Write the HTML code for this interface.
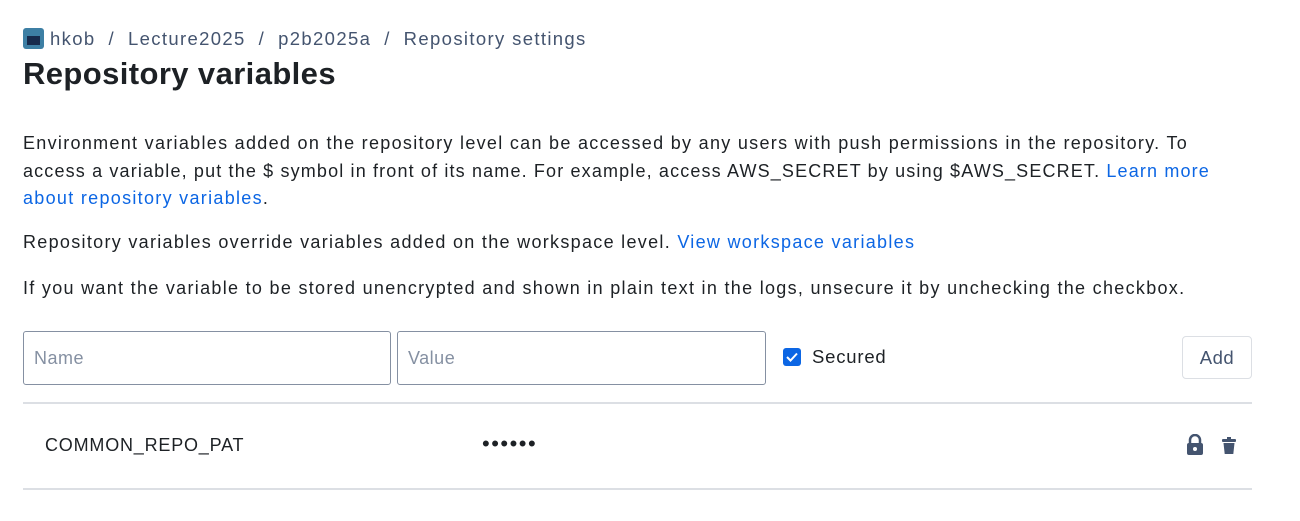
<!DOCTYPE html>
<html><head><style>
body{margin:0;width:1300px;height:521px;background:#fff;font-family:"Liberation Sans",sans-serif;color:#172b4d;position:relative;overflow:hidden}
.a{position:absolute;white-space:nowrap}
.crumb{left:23px;top:28px;font-size:18.5px;color:#44546f;letter-spacing:1.35px}
h1{position:absolute;left:23px;top:56px;margin:0;font-size:31px;font-weight:bold;color:#1d2125;letter-spacing:0.4px}
.p{position:absolute;left:23px;font-size:18px;line-height:27.5px;color:#1d2125;white-space:nowrap;letter-spacing:1.3px}
a{color:#0c66e4;text-decoration:none}
.in{position:absolute;top:331px;height:52px;border:1.5px solid #8590a2;border-radius:3px;font-size:18px;color:#8590a2;line-height:52px;padding-left:10px;box-sizing:border-box;letter-spacing:0.5px}
</style></head><body>
<div class="a crumb"><span style="display:inline-block;width:21px;height:21px;background:#3d7fa4;border-radius:3px;vertical-align:-4px;margin-right:6px;position:relative"><span style="position:absolute;left:4px;top:8px;width:13px;height:9px;background:#172b4d"></span></span>hkob &nbsp;/ &nbsp;Lecture2025 &nbsp;/ &nbsp;p2b2025a &nbsp;/ &nbsp;Repository settings</div>
<h1>Repository variables</h1>
<div class="p" style="top:130px">Environment variables added on the repository level can be accessed by any users with push permissions in the repository. To<br><span style="letter-spacing:1.15px">access a variable, put the $ symbol in front of its name. For example, access AWS_SECRET by using $AWS_SECRET. <a>Learn more</a></span><br><a>about repository variables</a>.</div>
<div class="p" style="top:229px">Repository variables override variables added on the workspace level. <a>View workspace variables</a></div>
<div class="p" style="top:275px">If you want the variable to be stored unencrypted and shown in plain text in the logs, unsecure it by unchecking the checkbox.</div>
<div class="in" style="left:23px;width:368px;height:54px">Name</div>
<div class="in" style="left:397px;width:369px;height:54px">Value</div>
<div class="a" style="left:783px;top:348px;width:18px;height:18px;background:#0c66e4;border-radius:3px"><svg width="18" height="18"><path d="M4 9l3.5 3.5L14 5.5" stroke="#fff" stroke-width="2" fill="none"/></svg></div>
<div class="a" style="left:812px;top:346px;font-size:18.5px;color:#1d2125;letter-spacing:0.8px">Secured</div>
<div class="a" style="left:1182px;top:336px;width:70px;height:43px;border:1px solid #dcdfe4;border-radius:4px;box-sizing:border-box;text-align:center;line-height:41px;font-size:18.5px;color:#44546f;letter-spacing:0.5px">Add</div>
<div class="a" style="left:23px;top:402px;width:1229px;height:2px;background:#dcdfe4"></div>
<div class="a" style="left:45px;top:435px;font-size:18px;color:#1d2125;letter-spacing:0.8px">COMMON_REPO_PAT</div>
<div class="a" style="left:482px;top:431px;font-size:22px;color:#1d2125;letter-spacing:1.5px">••••••</div>
<svg class="a" style="left:1186px;top:434px" width="18" height="22" viewBox="0 0 18 22"><path d="M4 9V6a5 5 0 0 1 10 0v3" stroke="#44546f" stroke-width="2.5" fill="none"/><rect x="1" y="9" width="16" height="12" rx="2" fill="#44546f"/><circle cx="9" cy="15" r="2" fill="#fff"/></svg>
<svg class="a" style="left:1221px;top:437px" width="16" height="18" viewBox="0 0 16 18"><rect x="1" y="2" width="14" height="3" rx="1" fill="#44546f"/><rect x="6" y="0" width="4" height="3" fill="#44546f"/><path d="M2.5 6h11l-1.2 11h-8.6z" fill="#44546f"/></svg>
<div class="a" style="left:23px;top:488px;width:1229px;height:2px;background:#dcdfe4"></div>
</body></html>
